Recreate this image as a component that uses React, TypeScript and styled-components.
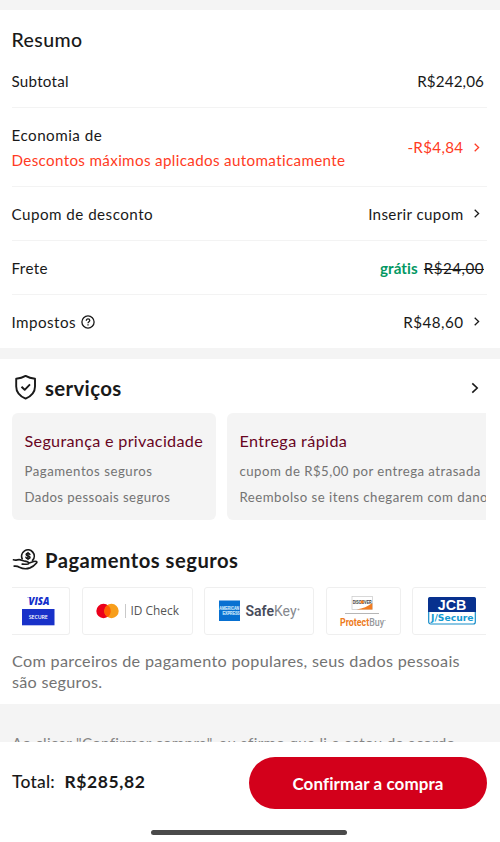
import React from "react";
import styled, { createGlobalStyle } from "styled-components";

const Global = createGlobalStyle`
  * { box-sizing: border-box; }
  body { margin: 0; background: #fff; color: #191919; font-family: Lato, "Noto Sans", sans-serif; }
  svg { display: block; flex: none; }
`;

const Screen = styled.div`
  width: 500px;
  height: 842px;
  display: flex;
  flex-direction: column;
  overflow: hidden;
  background: #fff;
`;

const Divider = styled.div<{ $h: number }>`
  flex: none;
  height: ${(p) => p.$h}px;
  background: #f4f4f4;
`;

const Summary = styled.section`
  flex: none;
  height: 338px;
  padding: 0 13px 0 11.5px;
`;

const Heading = styled.h2`
  margin: 0;
  height: 44px;
  padding-top: 18px;
  font-size: 19.5px;
  line-height: 24px;
  font-weight: 500;
  letter-spacing: 0.4px;
`;

const Row = styled.div<{ $h?: number }>`
  display: flex;
  align-items: center;
  justify-content: space-between;
  height: ${(p) => p.$h ?? 54}px;
  padding-top: 1px;
  font-size: 15.2px;
  line-height: 25px;
  border-bottom: 1px solid #f3f3f3;
  &:last-child { border-bottom-color: transparent; }
`;

const Label = styled.div`
  display: flex;
  align-items: center;
  gap: 5px;
`;

const Stack = styled.div`
  display: flex;
  flex-direction: column;
`;

const Text = styled.span<{ $ls: number; $color?: string }>`
  letter-spacing: ${(p) => p.$ls}px;
  color: ${(p) => p.$color ?? "inherit"};
  white-space: nowrap;
`;

const Value = styled.div<{ $color?: string; $link?: boolean }>`
  display: flex;
  align-items: center;
  gap: ${(p) => (p.$link ? 9.5 : 6)}px;
  padding-right: ${(p) => (p.$link ? 6 : 3)}px;
  color: ${(p) => p.$color ?? "inherit"};
`;

const Free = styled(Text)`
  font-weight: 700;
  color: #049863;
`;

const Struck = styled(Text)`
  text-decoration: line-through;
  text-decoration-thickness: 1px;
`;

const Services = styled.section`
  flex: none;
  height: 345px;
  padding: 0 14px 0 12px;
`;

const SectionTitle = styled.div<{ $h: number; $top: number }>`
  display: flex;
  align-items: center;
  height: ${(p) => p.$h}px;
  padding: ${(p) => p.$top}px 6px 0 0;
`;

const TitleText = styled.h2<{ $size: number; $ls: number }>`
  margin: 0 auto 0 6px;
  font-size: ${(p) => p.$size}px;
  line-height: 26px;
  font-weight: 700;
  letter-spacing: ${(p) => p.$ls}px;
`;

const Cards = styled.div`
  display: flex;
  gap: 11px;
  overflow: hidden;
`;

const Card = styled.article<{ $w: number }>`
  flex: none;
  width: ${(p) => p.$w}px;
  height: 107px;
  padding: 15px 12px 0 12.5px;
  display: flex;
  flex-direction: column;
  border-radius: 6px;
  background: #f4f4f4;
  color: #737373;
  font-size: 13.2px;
  line-height: 25.5px;
`;

const CardTitle = styled.h3<{ $ls: number }>`
  margin: 0 0 5px;
  font-size: 16.2px;
  line-height: 26px;
  font-weight: 400;
  letter-spacing: ${(p) => p.$ls}px;
  color: #68051f;
  white-space: nowrap;
`;

const Logos = styled.div`
  display: flex;
  gap: 11.6px;
  overflow: hidden;
`;

const Logo = styled.div<{ $w: number; $edge?: "left" }>`
  flex: none;
  display: flex;
  align-items: center;
  justify-content: center;
  width: ${(p) => p.$w}px;
  height: 48px;
  padding-right: ${(p) => (p.$edge ? 5 : 0)}px;
  border: 1px solid #efefef;
  border-left-width: ${(p) => (p.$edge ? 0 : 1)}px;
  border-radius: ${(p) => (p.$edge ? "0 3px 3px 0" : "3px")};
`;

const Note = styled.p`
  margin: 0;
  padding-top: 15px;
  display: flex;
  flex-direction: column;
  font-size: 16.2px;
  line-height: 21px;
  color: #737373;
`;

const Terms = styled.div`
  flex: none;
  height: 38px;
  padding: 29px 12px 0;
  overflow: hidden;
  background: #f4f4f4;
  color: #858585;
  font-size: 15.2px;
  line-height: 20px;
`;

const Footer = styled.footer`
  flex: none;
  height: 100px;
  display: flex;
  flex-direction: column;
  align-items: center;
  background: #fff;
`;

const Checkout = styled.div`
  width: 100%;
  display: flex;
  align-items: center;
  justify-content: space-between;
  padding: 15px 13.5px 0 12px;
`;

const Total = styled.div`
  display: flex;
  gap: 9.5px;
  margin-top: -3px;
  font-size: 17.5px;
  line-height: 24px;
  font-weight: 500;
`;

const Strong = styled(Text)`
  font-weight: 700;
`;

const Button = styled.button`
  width: 238px;
  height: 52px;
  padding: 1px 0 0 1px;
  border: 0;
  border-radius: 26px;
  background: #d3001b;
  color: #fff;
  font: 700 17px/24px Lato, sans-serif;
  letter-spacing: 0.1px;
`;

const HomeBar = styled.div`
  width: 196px;
  height: 5px;
  margin: 21px 2px 0 0;
  border-radius: 3px;
  background: #4a4a4a;
`;

const Chevron = ({ big }: { big?: boolean }) => (
  <svg width={big ? 10 : 8} height={big ? 14 : 10} viewBox={big ? "0 0 10 14" : "0 0 8 10"} fill="none" stroke="currentColor" strokeWidth={big ? 1.6 : 1.3}>
    <path d={big ? "M2.3 2.3 7.2 7 2.3 11.7" : "M1.7 .8 5.6 4.5 1.7 8.2"} />
  </svg>
);

const Help = () => (
  <svg width="14" height="14" viewBox="0 0 14 14" fill="none" stroke="currentColor" strokeWidth="1.3">
    <circle cx="7" cy="7" r="6.1" />
    <path d="M5.3 5.7C5.3 4.5 6 3.9 7 3.9S8.8 4.6 8.8 5.5C8.8 6.7 7 6.8 7 8.3M7 9.2v1.2" />
  </svg>
);

const Shield = () => (
  <svg width="27" height="26" viewBox="0 0 27 26" fill="none" stroke="#191919" strokeWidth="1.9" strokeLinejoin="round">
    <path d="M13.6 1.5C10.5 3.3 7.4 4 4.2 4.3V12c0 5.900 4.200 9.900 9.400 12.200C18.800 21.900 23 17.900 23 12V4.300C19.800 4 16.700 3.300 13.600 1.500Z" transform="translate(0 -.6)" />
    <path d="m9.500 11.700 3.200 3.100 5.300-5.500" />
  </svg>
);

const HandCoin = () => (
  <svg width="27" height="22" viewBox="0 0 27 22" fill="none" stroke="#191919" strokeWidth="1.7" strokeLinecap="round" strokeLinejoin="round">
    <path d="M10.200 9.800A6.300 6.300 0 1 1 20.600 11.400" />
    <path d="M17.900 5.500c-.3-.9-1-1.200-1.900-1.200-1.100 0-1.900.5-1.900 1.300 0 1.900 3.900.8 3.900 2.700 0 .9-.8 1.300-2 1.300-1.100 0-1.900-.5-2.100-1.300M16 3.500v7" strokeWidth="1.500" />
    <path d="M1.500 10.800C4.500 12 6.200 9.700 9.600 11.200L13 12.200c2.500.5 3.900 1 3.700 2.200-.2 1.200-2.500 1-6.500.7M16.500 14.200l5.200-1.700c2.200-.7 3.900.2 2.800 1.500-1.300 1.600-3.500 3.700-6.500 4.900-3.500 1.300-7.500.9-10.600-.7-1.700-1.100-3.600-1.300-5.200-1.100" />
  </svg>
);

const Visa = () => (
  <svg width="34" height="30" viewBox="0 0 34 30">
    <path d="M6 1.300h3.600l.4 1.700C9 1.900 7.800 1.500 6 1.500Z" fill="#1430cb" />
    <text x="7.500" y="8.600" fontFamily="Open Sans, sans-serif" fontWeight="800" fontStyle="italic" fontSize="10" textLength="21" lengthAdjust="spacingAndGlyphs" fill="#1430cb">VISA</text>
    <rect x="1" y="13" width="32.500" height="16.300" fill="#1831c9" />
    <text x="17.300" y="23" textAnchor="middle" fontFamily="Open Sans, sans-serif" fontWeight="600" fontSize="5.400" textLength="19" fill="#fff">SECURE</text>
  </svg>
);

const IdCheck = () => (
  <svg width="85" height="18" viewBox="0 0 85 18">
    <circle cx="8.500" cy="9" r="7.200" fill="#eb001b" />
    <circle cx="16.500" cy="9" r="7.200" fill="#f79e1b" />
    <path d="M12.500 3a7.200 7.200 0 0 1 0 12 7.200 7.200 0 0 1 0-12Z" fill="#ff5f00" />
    <path d="M30.500 2v14" stroke="#c9c9c9" />
    <text x="35.500" y="13.300" fontFamily="Open Sans, sans-serif" fontSize="12" textLength="48.500" lengthAdjust="spacingAndGlyphs" fill="#555">ID Check</text>
  </svg>
);

const SafeKey = () => (
  <svg width="83" height="22" viewBox="0 0 83 22">
    <rect x="1" y=".5" width="21" height="20.500" fill="#0870d1" />
    <g fontFamily="Liberation Sans, sans-serif" fontWeight="700" fontSize="4.600" fill="#b5daf6" stroke="#d4eafa" strokeWidth=".2">
      <text x="1.300" y="10.300" textLength="20" lengthAdjust="spacingAndGlyphs">AMERICAN</text>
      <text x="4.500" y="15.300" textLength="17.300" lengthAdjust="spacingAndGlyphs">EXPRESS</text>
    </g>
    <g fontFamily="Roboto, sans-serif" fontSize="15">
      <text x="27.500" y="16" fontWeight="600" textLength="28.500" lengthAdjust="spacingAndGlyphs" fill="#484b5a">Safe</text>
      <text x="56" y="16" textLength="22.500" lengthAdjust="spacingAndGlyphs" fill="#85878d">Key</text>
    </g>
    <circle cx="80.500" cy="9.500" r="1" fill="#999" />
  </svg>
);

const Discover = () => (
  <svg width="48" height="36" viewBox="0 0 48 36">
    <rect x="13" y="3.500" width="20.500" height="13" fill="#fff" stroke="#c8c8c8" strokeWidth=".7" />
    <path d="M33.300 10v6.500H17.500C24 15.500 29 13.500 33.300 10Z" fill="#f27c21" />
    <text x="13.700" y="10.600" fontFamily="Liberation Sans, sans-serif" fontWeight="700" fontSize="4.700" textLength="19" lengthAdjust="spacingAndGlyphs" fill="#333">DISCOVER</text>
    <circle cx="23" cy="9" r="1.700" fill="#f27c21" />
    <path d="M6 20.500h34" stroke="#b6b6b6" />
    <text x="1" y="32.500" fontFamily="Roboto, sans-serif" fontSize="10.500" fontWeight="700" textLength="44" lengthAdjust="spacingAndGlyphs" fill="#ed7b21">Protect<tspan fontWeight="500" fill="#96989b">Buy</tspan></text>
    <circle cx="46" cy="27.500" r=".6" fill="#999" />
  </svg>
);

const Jcb = () => (
  <svg width="48" height="28" viewBox="0 0 48 28">
    <rect x=".7" y=".7" width="46.600" height="26.300" rx="2" fill="#fff" stroke="#168dc9" strokeWidth="1.200" />
    <path d="M0 15V2Q0 0 2 0H46Q48 0 48 2V15Z" fill="#08318e" />
    <text x="24" y="12.700" textAnchor="middle" fontFamily="Liberation Sans, sans-serif" fontWeight="700" fontSize="14" textLength="28.500" lengthAdjust="spacingAndGlyphs" fill="#fff">JCB</text>
    <text x="24.300" y="24" textAnchor="middle" fontFamily="DejaVu Sans, sans-serif" fontWeight="700" fontSize="9.500" textLength="42.500" lengthAdjust="spacingAndGlyphs" fill="#159bd2">J/Secure</text>
  </svg>
);

export default function App() {
  return (
    <>
      <Global />
      <Screen>
        <Divider $h={10} />
        <Summary>
          <Heading>Resumo</Heading>
          <Row>
            <Text $ls={0.25}>Subtotal</Text>
            <Value><Text $ls={0.12}>R$242,06</Text></Value>
          </Row>
          <Row $h={79}>
            <Stack>
              <Text $ls={0.5}>Economia de</Text>
              <Text $ls={0.34} $color="#ff3b24">Descontos máximos aplicados automaticamente</Text>
            </Stack>
            <Value $link $color="#ff3b24"><Text $ls={0.32}>-R$4,84</Text><Chevron /></Value>
          </Row>
          <Row>
            <Text $ls={0.47}>Cupom de desconto</Text>
            <Value $link><Text $ls={0.35}>Inserir cupom</Text><Chevron /></Value>
          </Row>
          <Row>
            <Text $ls={0.4}>Frete</Text>
            <Value><Free $ls={0.1}>grátis</Free><Struck $ls={0.45}>R$24,00</Struck></Value>
          </Row>
          <Row>
            <Label><Text $ls={0.45}>Impostos</Text><Help /></Label>
            <Value $link><Text $ls={0.45}>R$48,60</Text><Chevron /></Value>
          </Row>
        </Summary>
        <Divider $h={11} />
        <Services>
          <SectionTitle $h={54} $top={3}>
            <Shield />
            <TitleText $size={20.4} $ls={0.35}>serviços</TitleText>
            <Chevron big />
          </SectionTitle>
          <Cards>
            <Card $w={204}>
              <CardTitle $ls={0.3}>Segurança e privacidade</CardTitle>
              <Text $ls={0.52}>Pagamentos seguros</Text>
              <Text $ls={0.4}>Dados pessoais seguros</Text>
            </Card>
            <Card $w={275}>
              <CardTitle $ls={0.38}>Entrega rápida</CardTitle>
              <Text $ls={0.47}>cupom de R$5,00 por entrega atrasada</Text>
              <Text $ls={0.49}>Reembolso se itens chegarem com danos</Text>
            </Card>
          </Cards>
          <SectionTitle $h={67} $top={12}>
            <HandCoin />
            <TitleText $size={20.2} $ls={0.5}>Pagamentos seguros</TitleText>
          </SectionTitle>
          <Logos>
            <Logo $w={58} $edge="left"><Visa /></Logo>
            <Logo $w={111}><IdCheck /></Logo>
            <Logo $w={110}><SafeKey /></Logo>
            <Logo $w={75}><Discover /></Logo>
            <Logo $w={80}><Jcb /></Logo>
          </Logos>
          <Note>
            <Text $ls={0.31}>Com parceiros de pagamento populares, seus dados pessoais</Text>
            <Text $ls={0.28}>são seguros.</Text>
          </Note>
        </Services>
        <Terms>
          <Text $ls={0.3}>Ao clicar "Confirmar compra", eu afirmo que li e estou de acordo</Text>
        </Terms>
        <Footer>
          <Checkout>
            <Total><Text $ls={0.2}>Total:</Text><Strong $ls={0.6}>R$285,82</Strong></Total>
            <Button>Confirmar a compra</Button>
          </Checkout>
          <HomeBar />
        </Footer>
      </Screen>
    </>
  );
}
